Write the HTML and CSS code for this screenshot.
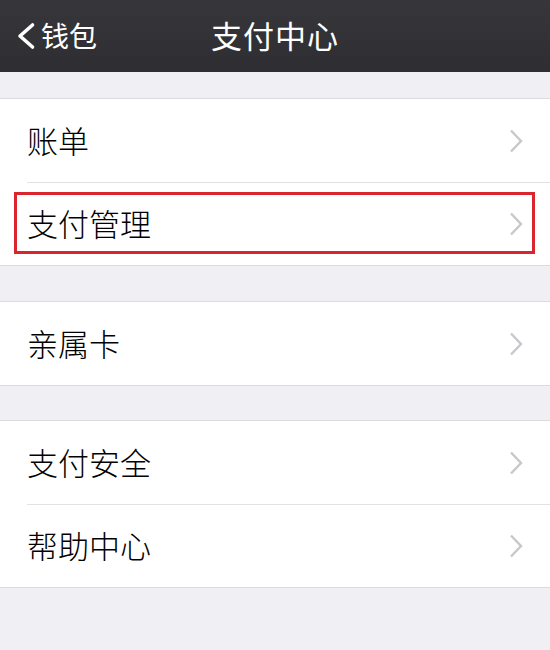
FILE: index.html
```html
<!DOCTYPE html>
<html lang="zh-CN">
<head>
<meta charset="utf-8">
<title>支付中心</title>
<link rel="stylesheet" href="styles.css">
</head>
<body>
<div class="page">
  <header class="nav">
    <div class="nav-back">
      <svg class="back-icon" width="22" height="28" viewBox="0 0 22 28"><path d="M17.5 3 L5 14 L17.5 25" fill="none" stroke="#fff" stroke-width="3.6" stroke-linecap="round" stroke-linejoin="round"/></svg>
      <span class="back-text">钱包</span>
    </div>
    <h1 class="nav-title">支付中心</h1>
  </header>
  <main class="content">
    <section class="group group-first">
      <div class="row"><span class="row-label">账单</span><svg class="chev" width="14" height="24" viewBox="0 0 14 24"><path d="M2 1.5 L12 12 L2 22.5" fill="none" stroke="#c7c7cc" stroke-width="2.4"/></svg></div>
      <div class="row row-marked"><span class="row-label">支付管理</span><svg class="chev" width="14" height="24" viewBox="0 0 14 24"><path d="M2 1.5 L12 12 L2 22.5" fill="none" stroke="#c7c7cc" stroke-width="2.4"/></svg><span class="mark"></span></div>
    </section>
    <section class="group">
      <div class="row"><span class="row-label">亲属卡</span><svg class="chev" width="14" height="24" viewBox="0 0 14 24"><path d="M2 1.5 L12 12 L2 22.5" fill="none" stroke="#c7c7cc" stroke-width="2.4"/></svg></div>
    </section>
    <section class="group group-last">
      <div class="row"><span class="row-label">支付安全</span><svg class="chev" width="14" height="24" viewBox="0 0 14 24"><path d="M2 1.5 L12 12 L2 22.5" fill="none" stroke="#c7c7cc" stroke-width="2.4"/></svg></div>
      <div class="row"><span class="row-label">帮助中心</span><svg class="chev" width="14" height="24" viewBox="0 0 14 24"><path d="M2 1.5 L12 12 L2 22.5" fill="none" stroke="#c7c7cc" stroke-width="2.4"/></svg></div>
    </section>
  </main>
</div>
</body>
</html>
```
FILE: styles.css
```css
* { box-sizing: border-box; }
html, body { margin: 0; padding: 0; }
body {
  background: #efeff4;
  font-family: "Noto Sans CJK SC", "Noto Sans", sans-serif;
  width: 550px;
  height: 650px;
  overflow: hidden;
}
.page { width: 550px; }
.nav {
  height: 72px;
  background: linear-gradient(#37373b, #2e2e32);
  position: relative;
  display: flex;
  align-items: center;
  justify-content: center;
  color: #fff;
}
.nav-back {
  position: absolute;
  left: 15px;
  top: 0;
  height: 72px;
  display: flex;
  align-items: center;
  gap: 4px;
}
.back-icon { display: block; margin-top: -1px; }
.back-text {
  font-size: 28px;
  font-weight: 400;
  line-height: 1;
  margin-top: -2px;
}
.nav-title {
  margin: 0;
  font-size: 31px;
  font-weight: 400;
  line-height: 1;
  margin-top: -4px;
  letter-spacing: 1px;
}
.content { padding-top: 26px; }
.group {
  background: #fff;
  border-top: 1px solid #dcdce0;
  border-bottom: 1px solid #dcdce0;
  margin-top: 35px;
}
.group-first { margin-top: 0; }
.group-last { margin-top: 34px; }
.row {
  position: relative;
  height: 83px;
  display: flex;
  align-items: center;
  justify-content: space-between;
  padding: 0 27px 0 27px;
}
.row + .row::before {
  content: "";
  position: absolute;
  left: 27px;
  right: 0;
  top: 0;
  border-top: 1px solid #e2e2e6;
}
.row-label {
  font-size: 31px;
  font-weight: 300;
  color: #000;
  line-height: 1;
  margin-top: -3px;
}
.chev { display: block; }
.mark {
  position: absolute;
  left: 14px;
  right: 15px;
  top: 10px;
  bottom: 11px;
  border: 3px solid #d9252e;
}
```
